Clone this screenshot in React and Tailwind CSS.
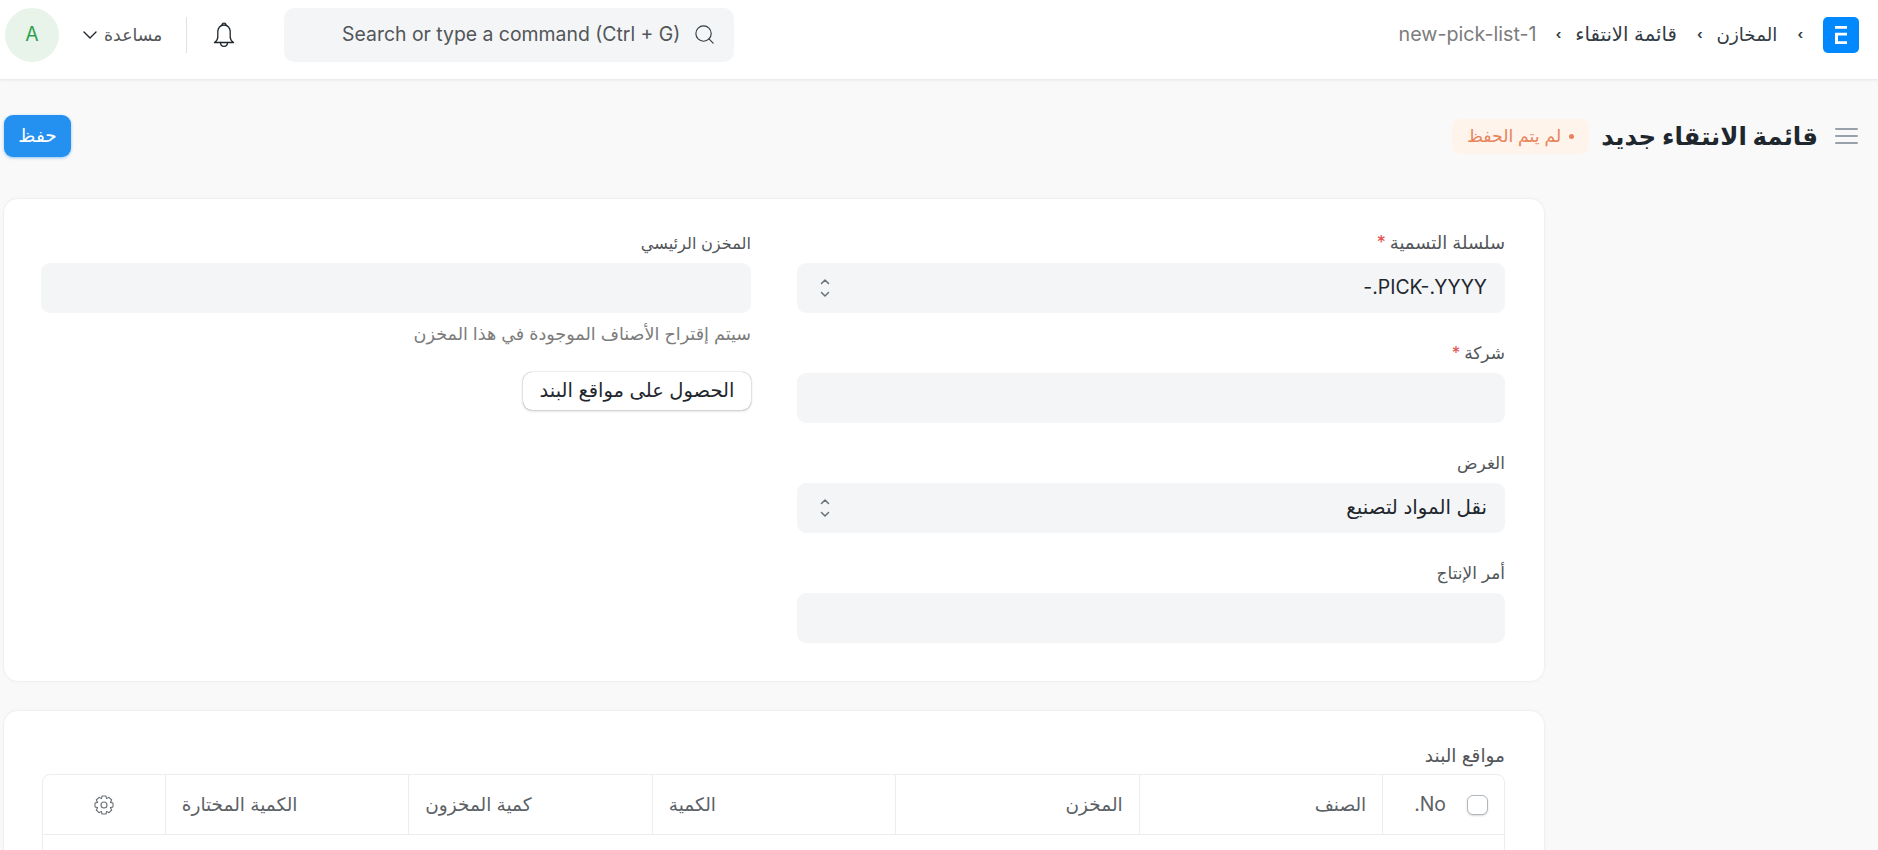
import React from "react";
import { ChevronDown, Search } from "lucide-react";

function Field({ label, required, value, select, labelClass = "text-[17px]", valueClass = "text-[19.4px]" }) {
  return (
    <div>
      <div className={`flex h-5 items-center gap-1 leading-5 text-[#525659] ${labelClass}`}>
        <span>{label}</span>
        {required && <span className="text-[#e24c4c]">*</span>}
      </div>
      <div className={`mt-2.5 flex h-[50px] items-center justify-between rounded-[9px] bg-[#f4f5f6] pr-[18px] pl-[22px] text-[#1f272e] ${valueClass}`}>
        <span>{value}</span>
        {select && (
          <svg width="12" height="24" viewBox="0 0 12 24" fill="none" stroke="#687178" strokeWidth="1.5" strokeLinecap="round" strokeLinejoin="round">
            <path d="M2.5 7.5 6 4l3.5 3.500" />
            <path d="M2.500 16.500 6 20l3.500-3.500" />
          </svg>
        )}
      </div>
    </div>
  );
}

function Sep() {
  return <span className="ml-[20px] text-[13px] font-bold text-[#333c44]">›</span>;
}

function Th({ children, end }) {
  return (
    <div className={`flex items-center border-l border-[#ededed] px-4 text-[18.5px] text-[#5c6166] ${end ? "justify-end" : ""}`}>
      {children}
    </div>
  );
}

function gearPath() {
  const teeth = 8;
  const outer = 9.2;
  const inner = 6.9;
  const pts = [];
  for (let i = 0; i < teeth; i++) {
    const a = (i * 2 * Math.PI) / teeth;
    const step = (2 * Math.PI) / teeth;
    const offs = [
      [-0.5, inner],
      [-0.27, outer],
      [0.27, outer],
      [0.5, inner],
    ];
    offs.forEach(([o, r]) => {
      const t = a + o * step - Math.PI / 2;
      pts.push(`${(10 + r * Math.cos(t)).toFixed(2)} ${(10 + r * Math.sin(t)).toFixed(2)}`);
    });
  }
  return `M${pts.join("L")}Z`;
}

export default function App() {
  return (
    <div
      dir="rtl"
      className="h-[850px] overflow-hidden bg-[#f9f9f9] text-[#1f272e]"
      style={{ fontFamily: "Inter, 'Noto Sans', 'DejaVu Sans', sans-serif" }}
    >
      <header className="flex h-20 items-center border-b border-[#ebeef0] bg-white pr-[19px] pb-[10px] pl-[5px] shadow-[0_1px_2px_rgba(0,0,0,0.05)]">
        <div className="flex h-9 w-9 items-center justify-center rounded-[5px] bg-[#0089ff]">
          <svg width="12" height="18" viewBox="0 0 12 18" fill="white">
            <path d="M0 0h12v2.700H0zM0 6.700h12v2.700H3v5.900h9V18H0z" />
          </svg>
        </div>
        <nav className="mr-[20px] flex items-center text-[#333c44]">
          <Sep />
          <span className="ml-[14px] text-[18.3px]">المخازن</span>
          <Sep />
          <span className="ml-[14px] text-[19.7px]">قائمة الانتقاء</span>
          <span className="ml-[19px] text-[13px] font-bold text-[#333c44]">›</span>
          <span className="text-[19.7px] text-[#7c7c7c]">new-pick-list-1</span>
        </nav>
        <div className="flex-1" />
        <div dir="ltr" className="flex h-[54px] w-[450px] items-center justify-end gap-[13px] rounded-[10px] bg-[#f4f5f6] pr-[18px] text-[19.4px] text-[#525659]">
          <span>Search or type a command (Ctrl + G)</span>
          <Search size={23} strokeWidth={1.2} className="text-[#333c44]" />
        </div>
        <svg className="mr-[48px]" width="24" height="28" viewBox="0 0 24 28" fill="none" stroke="#1f272e" strokeWidth="1.3" strokeLinejoin="round" strokeLinecap="round">
          <path d="M10 4.200c0-1.100.9-2 2-2s2 .9 2 2" />
          <path d="M12 4c-3.800 0-6.200 3-6.200 6.600v5.400c0 2.500-1.300 4-3.300 5.500h19c-2-1.500-3.300-3-3.300-5.500v-5.400C18.200 7 15.800 4 12 4Z" />
          <path d="M8.500 21.500c0 2.400 1.500 3.800 3.500 3.800s3.500-1.400 3.500-3.800" />
        </svg>
        <div className="mr-[25px] h-9 w-px bg-[#dfe3e6]" />
        <div className="mr-[24px] flex items-center gap-0.5 text-[17.3px] text-[#525659]">
          <span>مساعدة</span>
          <ChevronDown size={24} strokeWidth={1.4} className="text-[#1f272e]" />
        </div>
        <div className="mr-[19px] flex h-[54px] w-[54px] items-center justify-center rounded-full bg-[#e8f4ea] text-[19.4px] text-[#30a14e]">
          A
        </div>
      </header>

      <main className="pt-[35px] pr-[334px] pl-1">
        <div className="mr-[-314px] flex h-[42px] items-center justify-between">
          <div className="flex items-center">
            <svg width="23" height="18" viewBox="0 0 23 18" stroke="#98a1a9" strokeWidth="2" strokeLinecap="round">
              <path d="M1 2h21M1 9h21M1 16h21" />
            </svg>
            <h1 className="mr-[17px] text-[24.4px] leading-none font-bold text-[#1f272e]">قائمة الانتقاء جديد</h1>
            <div className="mr-3 flex h-[35px] items-center gap-2 rounded-[8px] bg-[#fff4ec] px-[15px] text-[17.3px] text-[#e8835a]">
              <span className="h-[5px] w-[5px] rounded-full bg-[#e8835a]" />
              <span>لم يتم الحفظ</span>
            </div>
          </div>
          <button className="flex h-[42px] w-[67px] items-center justify-center rounded-[9px] bg-[#2490ef] text-[18.5px] text-white shadow-[0_1px_3px_rgba(36,144,239,0.5)]">
            حفظ
          </button>
        </div>

        <section className="mt-[42px] grid h-[482px] grid-cols-[708px_710px] gap-x-[46px] rounded-[14px] bg-white pt-[34px] pr-[39px] pl-[37px] shadow-[0_0_3px_rgba(0,0,0,0.1)]">
          <div className="flex flex-col gap-[30px]">
            <Field label="سلسلة التسمية" labelClass="text-[18px]" required value="PICK-.YYYY.-" select />
            <Field label="شركة" required />
            <Field label="الغرض" value="نقل المواد لتصنيع" valueClass="text-[19.8px]" select />
            <Field label="أمر الإنتاج" />
          </div>
          <div>
            <Field label="المخزن الرئيسي" labelClass="text-[16.2px]" />
            <p className="mt-[11px] text-[17.6px] leading-5 text-[#7c7c7c]">سيتم إقتراح الأصناف الموجودة في هذا المخزن</p>
            <button className="mt-[28px] flex h-[38px] w-[228px] items-center justify-center rounded-[9px] bg-white text-[19.5px] text-[#1f272e] shadow-[0_0_1px_rgba(0,0,0,0.45),0_1px_3px_rgba(0,0,0,0.2)]">
              الحصول على مواقع البند
            </button>
          </div>
        </section>

        <section className="mt-[30px] h-[300px] rounded-[14px] bg-white pt-[34px] pr-[39px] pl-[38px] shadow-[0_0_3px_rgba(0,0,0,0.1)]">
          <div className="flex h-5 items-center text-[18.5px] leading-5 text-[#525659]">مواقع البند</div>
          <div className="mt-[9px] h-[200px] rounded-t-[8px] border border-[#ededed]">
            <div className="grid h-[60px] grid-cols-[1fr_2fr_2fr_2fr_2fr_2fr_1fr] border-b border-[#ededed]">
              <Th>
                <span className="ml-[21px] h-5 w-[21px] shrink-0 rounded-[6px] border border-[#b0b6bb] bg-white shadow-[0_1px_2px_rgba(0,0,0,0.15)]" />
                <span className="text-[19.4px]">No.</span>
              </Th>
              <Th>الصنف</Th>
              <Th>المخزن</Th>
              <Th end>الكمية</Th>
              <Th end>كمية المخزون</Th>
              <Th end>الكمية المختارة</Th>
              <div className="flex items-center justify-center">
                <svg width="20" height="20" viewBox="0 0 20 20" fill="none" stroke="#6b7075" strokeWidth="1.1" strokeLinejoin="round">
                  <path d={gearPath()} />
                  <circle cx="10" cy="10" r="3" />
                </svg>
              </div>
            </div>
          </div>
        </section>
      </main>
    </div>
  );
}
